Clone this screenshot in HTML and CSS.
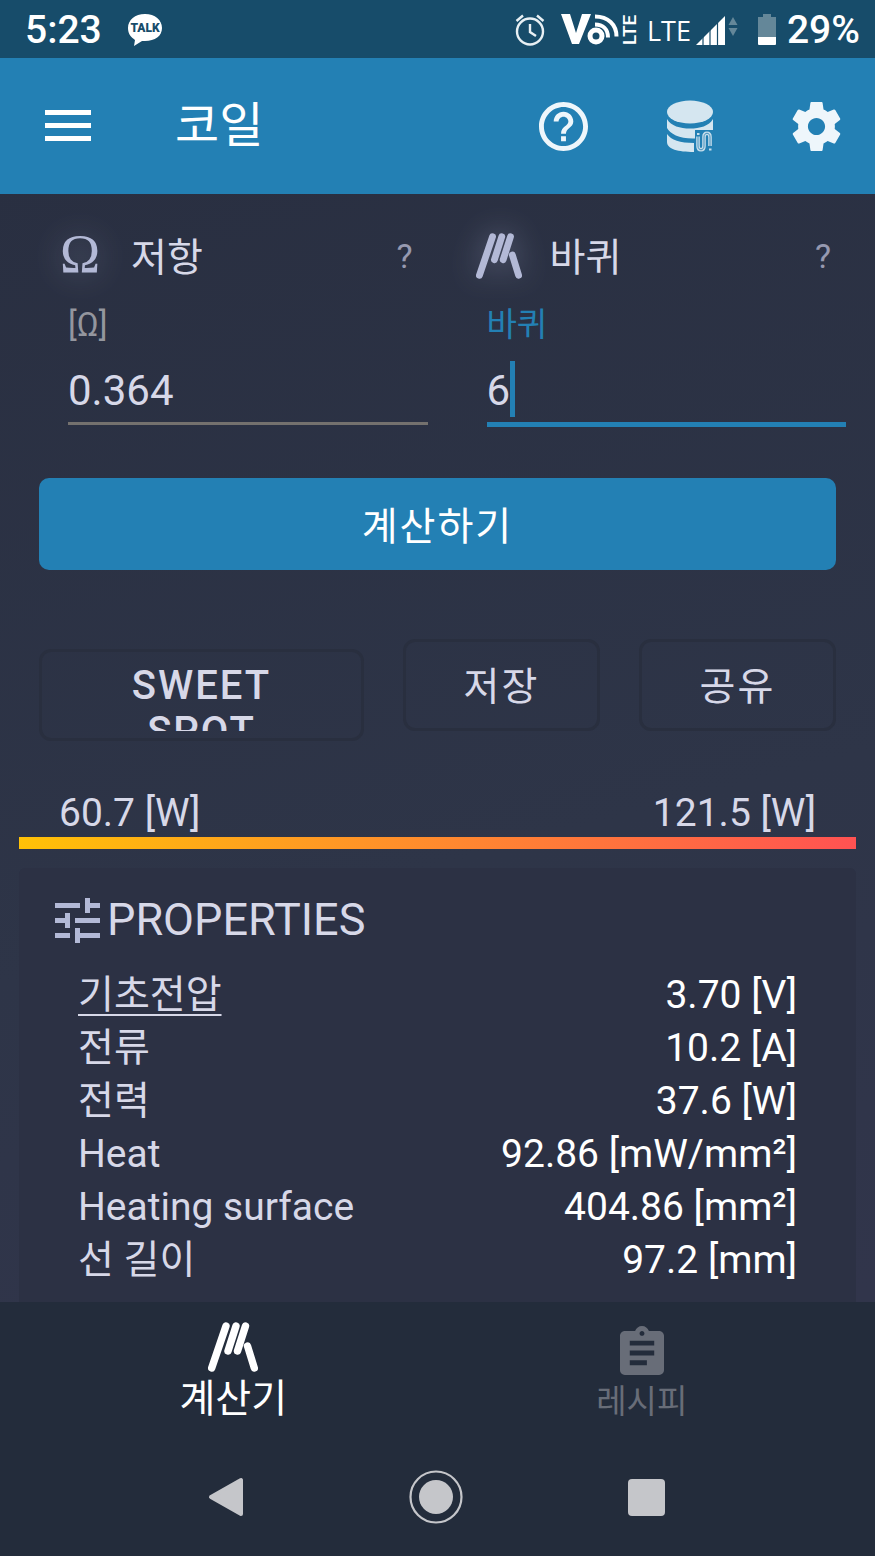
FILE: index.html
```html
<!DOCTYPE html>
<html lang="ko">
  <head>
    <meta charset="utf-8">
    <meta name="viewport" content="width=device-width, initial-scale=1">
    <title>코일</title>
    <link rel="stylesheet" href="styles.css">
  </head>
  <body>
    <svg class="defs" width="0" height="0" aria-hidden="true">
      <symbol id="coil" viewBox="0 0 50 50">
        <path d="M3.700 46 18 4M20 29 28 4M29.500 29 37.500 4M39.500 24 46.300 46" fill="none" stroke="currentColor" stroke-width="7.400" stroke-linecap="round" />
      </symbol>
    </svg>

    <div class="status-bar">
      <span class="clock">5:23</span>
      <svg class="talk" viewBox="0 0 36 34" width="36" height="34">
        <path d="M18 1C8 1 1 7 1 15c0 6 3 9 7 12l-1 6 8-5h3c10 0 17-5 17-13S28 1 18 1z" fill="#fff" />
        <text x="18" y="19" class="talk-text">TALK</text>
      </svg>
      <div class="status-icons">
        <svg class="alarm" viewBox="0 0 30 32" width="30" height="32" fill="none" stroke="#e8f0f4" stroke-width="2.400">
          <circle cx="15" cy="17.500" r="13" />
          <path d="M15 10v8l6 4M1.500 7 8 1.500M28.500 7 22 1.500" />
        </svg>
        <svg class="volte" viewBox="0 0 78 36" width="78" height="36">
          <path d="M0 2h9l6 19 6-19h9L18 32h-7z" fill="#fff" />
          <circle cx="35" cy="24" r="6" fill="none" stroke="#fff" stroke-width="5" />
          <path d="M34 12.500c8 0 13 5 13 13M34 4.500c13 0 21.500 8 21.500 20" fill="none" stroke="#fff" stroke-width="4" />
          <text x="-33" y="75" transform="rotate(-90)" class="volte-text">LTE</text>
        </svg>
        <span class="network">LTE</span>
        <svg class="signal" viewBox="0 0 42 30" width="42" height="30">
          <path d="M0 30 29 1v29z" fill="#fff" />
          <path d="M7 20v10M14 13v17M21.500 6v24" stroke="#174c6a" stroke-width="1.200" />
          <path d="m37 2 4.500 8h-9zM37 21l4.500-8h-9z" fill="#648799" />
        </svg>
        <svg class="battery" viewBox="0 0 18 32" width="18" height="32">
          <path d="M5 0h8v3h5v20H0V3h5z" fill="#648799" />
          <path d="M0 23h18v7q0 1-1 1H1q-1 0-1-1z" fill="#fff" />
        </svg>
        <span class="percent">29%</span>
      </div>
    </div>

    <header class="app-bar">
      <button class="icon-button" aria-label="메뉴">
        <svg viewBox="0 0 46 32" width="46" height="32">
          <path d="M0 0h46v5H0zM0 13h46v5H0zM0 26h46v5H0z" fill="#fff" />
        </svg>
      </button>
      <h1 class="title">코일</h1>
      <div class="actions">
        <button class="icon-button" aria-label="도움말">
          <svg viewBox="2 2 20 20" width="49" height="49">
            <path d="M11 18h2v-2h-2v2zm1-16C6.480 2 2 6.480 2 12s4.480 10 10 10 10-4.480 10-10S17.520 2 12 2zm0 18c-4.410 0-8-3.590-8-8s3.590-8 8-8 8 3.590 8 8-3.590 8-8 8zm0-14c-2.210 0-4 1.790-4 4h2c0-1.100.9-2 2-2s2 .9 2 2c0 2-3 1.750-3 5h2c0-2.250 3-2.500 3-5 0-2.210-1.790-4-4-4z" fill="#eef6fb" />
          </svg>
        </button>
        <button class="icon-button" aria-label="재료">
          <svg viewBox="-1 0 48 52" width="48" height="52">
            <g fill="#d5e6f0">
              <ellipse cx="23" cy="12" rx="23" ry="11.500" />
              <path d="M0 19c4 7 13 9.500 23 9.500S42 26 46 19v11H28v8.500C13 39 3 34 0 28z" />
              <path d="M0 34c4 6 13 9 27 9v9C11 52 0 49 0 42z" />
            </g>
            <path d="M31 36.500v9.500c0 5 6 5 6 0v-9c0-5 6-5 6 0v9" fill="none" stroke="#c6ddeb" stroke-width="3.600" />
            <path d="M31 36v10c0 5 6 5 6 0v-9c0-5 6-5 6 0v10" fill="none" stroke="#2580b3" stroke-width="0.800" />
            <path d="M30 34h2.500M42 49.500h2.500" stroke="#c6ddeb" stroke-width="2" />
          </svg>
        </button>
        <button class="icon-button" aria-label="설정">
          <svg viewBox="2 2 20 20" width="49" height="49">
            <path d="M19.430 12.980c.04-.32.070-.64.070-.98s-.03-.66-.07-.98l2.110-1.650c.19-.15.24-.42.120-.64l-2-3.460c-.12-.22-.39-.3-.61-.22l-2.490 1c-.52-.4-1.080-.73-1.690-.98l-.38-2.650C14.460 2.180 14.250 2 14 2h-4c-.25 0-.46.18-.49.42l-.38 2.650c-.61.250-1.170.59-1.690.98l-2.490-1c-.23-.09-.49 0-.61.220l-2 3.460c-.13.220-.07.490.120.640l2.110 1.650c-.04.32-.07.650-.07.980s.03.660.070.980l-2.110 1.650c-.19.150-.24.420-.12.640l2 3.460c.12.220.39.300.61.220l2.490-1c.52.400 1.080.730 1.690.980l.38 2.650c.03.240.24.420.49.420h4c.25 0 .46-.18.490-.42l.38-2.650c.61-.25 1.170-.59 1.690-.98l2.490 1c.23.090.49 0 .61-.22l2-3.460c.12-.22.070-.49-.12-.64l-2.110-1.650zM12 15.500c-1.930 0-3.500-1.570-3.500-3.500s1.570-3.500 3.500-3.500 3.500 1.570 3.500 3.500-1.570 3.500-3.500 3.500z" fill="#eef6fb" />
          </svg>
        </button>
      </div>
    </header>

    <main class="content">
      <div class="fields">
        <section class="field">
          <div class="field-head">
            <span class="field-icon omega">Ω</span>
            <h2 class="field-title">저항</h2>
            <button class="hint" aria-label="저항 도움말">?</button>
          </div>
          <div class="field-body">
            <label for="resistance">[Ω]</label>
            <input type="text" id="resistance" value="0.364">
          </div>
        </section>
        <section class="field">
          <div class="field-head">
            <span class="field-icon"><svg width="46" height="46"><use href="#coil" /></svg></span>
            <h2 class="field-title">바퀴</h2>
            <button class="hint" aria-label="바퀴 도움말">?</button>
          </div>
          <div class="field-body active">
            <label for="wraps">바퀴</label>
            <input type="text" id="wraps" value="6">
            <span class="caret"></span>
          </div>
        </section>
      </div>

      <button class="calculate">계산하기</button>

      <div class="button-row">
        <button class="outline wide"><span class="clip">SWEET SPOT</span></button>
        <button class="outline">저장</button>
        <button class="outline">공유</button>
      </div>

      <div class="range">
        <div class="range-values">
          <span>60.7 [W]</span>
          <span>121.5 [W]</span>
        </div>
        <div class="range-bar"></div>
      </div>

      <section class="panel">
        <h2 class="panel-title">
          <svg viewBox="3 3 18 18" width="45" height="45">
            <path d="M3 17v2h6v-2H3zM3 5v2h10V5H3zm10 16v-2h8v-2h-8v-2h-2v6h2zM7 9v2H3v2h4v2h2V9H7zm14 4v-2H11v2h10zm-6-4h2V7h4V5h-4V3h-2v6z" fill="#b3b9d6" />
          </svg>
          PROPERTIES
        </h2>
        <table class="properties">
          <tr><th scope="row"><a href="#">기초전압</a></th><td>3.70 [V]</td></tr>
          <tr><th scope="row">전류</th><td>10.2 [A]</td></tr>
          <tr><th scope="row">전력</th><td>37.6 [W]</td></tr>
          <tr><th scope="row">Heat</th><td>92.86 [mW/mm²]</td></tr>
          <tr><th scope="row">Heating surface</th><td>404.86 [mm²]</td></tr>
          <tr><th scope="row">선 길이</th><td>97.2 [mm]</td></tr>
        </table>
      </section>
    </main>

    <nav class="tabs">
      <a href="#" class="tab selected">
        <svg width="50" height="50"><use href="#coil" /></svg>
        <span>계산기</span>
      </a>
      <a href="#" class="tab">
        <svg viewBox="3 1 18 20" width="44" height="49">
          <path d="M19 3h-4.180C14.400 1.840 13.300 1 12 1c-1.300 0-2.400.84-2.820 2H5c-1.100 0-2 .9-2 2v14c0 1.100.9 2 2 2h14c1.100 0 2-.9 2-2V5c0-1.100-.9-2-2-2zm-7 0c.55 0 1 .45 1 1s-.45 1-1 1-1-.45-1-1 .45-1 1-1zm2 14H7v-2h7v2zm3-4H7v-2h10v2zm0-4H7V7h10v2z" fill="currentColor" />
        </svg>
        <span>레시피</span>
      </a>
    </nav>

    <div class="system-bar">
      <button class="icon-button" aria-label="뒤로">
        <svg viewBox="0 0 36 40" width="36" height="40">
          <path d="M3 20 33 3v34z" fill="#c5c6ca" stroke="#c5c6ca" stroke-width="4" stroke-linejoin="round" />
        </svg>
      </button>
      <button class="icon-button" aria-label="홈">
        <svg viewBox="0 0 54 54" width="54" height="54">
          <circle cx="27" cy="27" r="25.500" fill="none" stroke="#c5c6ca" stroke-width="2.200" />
          <circle cx="27" cy="27" r="17" fill="#c5c6ca" />
        </svg>
      </button>
      <button class="icon-button" aria-label="최근 앱">
        <svg viewBox="0 0 37 37" width="37" height="37">
          <rect width="37" height="37" rx="4" fill="#c5c6ca" />
        </svg>
      </button>
    </div>
  </body>
</html>
```

FILE: styles.css
```css
* {
  box-sizing: border-box;
}

body {
  display: flex;
  flex-direction: column;
  min-height: 100vh;
  margin: 0;
  background: linear-gradient(165deg, #292f41 10%, #2e3548 55%, #31354b 85%);
  color: #d7d8e8;
  font-family: Roboto, "Noto Sans CJK KR", sans-serif;
  font-size: 39px;
}

button {
  padding: 0;
  border: none;
  background: none;
  color: inherit;
  font: inherit;
  cursor: pointer;
}

h1,
h2 {
  margin: 0;
  font-weight: 400;
}

svg {
  display: block;
}

.defs {
  position: absolute;
}

.icon-button {
  display: flex;
}

/* status bar */
.status-bar {
  display: flex;
  align-items: center;
  height: 58px;
  padding: 2px 15px 0 25px;
  background-color: #174c6a;
  color: #fff;
  font-weight: 500;
}

.talk {
  margin-left: 25px;
}

.talk-text {
  fill: #174c6a;
  font-size: 12px;
  font-weight: 900;
  text-anchor: middle;
}

.status-icons {
  display: flex;
  align-items: center;
  margin-left: auto;
}

.volte {
  margin-left: 16px;
}

.volte-text {
  fill: #fff;
  font-size: 19px;
  font-weight: 500;
}

.network {
  margin-left: 8px;
  font-family: "Open Sans", sans-serif;
  font-size: 27px;
  font-weight: 400;
}

.signal {
  margin-left: 5px;
}

.battery {
  margin: 0 11px 0 20px;
}

/* app bar */
.app-bar {
  display: flex;
  align-items: center;
  height: 136px;
  padding: 0 34px 0 45px;
  background-color: #2380b4;
  color: #fff;
}

.title {
  margin-left: 84px;
  font-size: 48px;
  line-height: 56px;
}

.actions {
  display: flex;
  align-items: center;
  gap: 78px;
  margin-left: auto;
}

/* inputs */
.content {
  flex: 1;
  display: flex;
  flex-direction: column;
  padding: 24px 19px 0;
}

.fields {
  display: grid;
  grid-template-columns: 1fr 1fr;
}

.field-head {
  display: flex;
  align-items: center;
  height: 75px;
  padding: 0 25px 0 38px;
}

.field-icon {
  display: flex;
  justify-content: center;
  width: 46px;
  color: #b3b9d6;
  filter: drop-shadow(0 0 16px rgba(180, 185, 214, 0.4));
}

.omega {
  height: 46px;
  font-family: "Liberation Serif", serif;
  font-size: 54px;
  line-height: 42px;
}

.field-title {
  margin-left: 28px;
  padding-bottom: 4px;
  font-size: 39px;
}

.hint {
  margin-left: auto;
  color: #9699b0;
  font-size: 34px;
}

.field-body {
  position: relative;
  margin: 0 10px 0 49px;
}

.field-body label {
  display: block;
  height: 64px;
  color: #94969e;
  font-size: 33px;
  line-height: 64px;
}

.field-body input {
  display: block;
  width: 100%;
  height: 68px;
  padding: 2px 0 0;
  border: none;
  border-bottom: 3px solid #74716e;
  border-radius: 0;
  outline: none;
  background: none;
  color: inherit;
  font: inherit;
  font-size: 42px;
}

.active label {
  color: #2380b4;
}

.field-body.active input {
  height: 70px;
  border-bottom: 5px solid #2380b4;
}

.caret {
  position: absolute;
  bottom: 10px;
  left: 23px;
  width: 5px;
  height: 56px;
  background-color: #2380b4;
}

/* buttons */
.calculate {
  height: 92px;
  margin: 51px 20px 0;
  padding-bottom: 3px;
  border-radius: 10px;
  background-color: #2380b4;
  color: #fff;
  letter-spacing: 2px;
}

.button-row {
  display: grid;
  grid-template-columns: 325fr 197fr 197fr;
  gap: 39px;
  align-items: start;
  margin: 69px 20px 0;
}

.outline {
  height: 92px;
  padding-bottom: 4px;
  border: 3px solid #292f3f;
  border-radius: 12px;
  letter-spacing: 2px;
}

.wide {
  margin-top: 10px;
  padding: 10px 60px 7px;
  font-size: 40px;
  font-weight: 500;
}

/* label wraps and gets cut on narrow screens */
.clip {
  display: block;
  height: 69px;
  padding-top: 1px;
  overflow: hidden;
  line-height: 46px;
}

/* power range */
.range {
  margin-top: 48px;
}

.range-values {
  display: flex;
  justify-content: space-between;
  padding: 0 40px;
  line-height: 48px;
}

.range-bar {
  height: 12px;
  background: linear-gradient(to right, #ffc107, #ff8a2e 50%, #ff5252);
}

/* properties */
.panel {
  flex: 1;
  margin-top: 19px;
  padding: 26px 59px 10px 36px;
  border-radius: 6px 6px 0 0;
  background-color: #2c3144;
}

.panel-title {
  display: flex;
  align-items: center;
  gap: 7px;
  font-size: 45px;
  line-height: 52px;
}

.properties {
  width: 100%;
  margin-top: 23px;
  border-collapse: collapse;
}

.properties th,
.properties td {
  padding: 0;
  line-height: 53px;
}

.properties th {
  padding-left: 23px;
  font-weight: 400;
  text-align: left;
}

.properties td {
  color: #fff;
  text-align: right;
}

.properties a {
  color: inherit;
  text-decoration-thickness: 2px;
  text-underline-offset: 6px;
}

/* bottom navigation */
.tabs {
  display: grid;
  grid-template-columns: 1fr 1fr;
  height: 136px;
  padding: 0 29px;
  background-color: #232c3b;
}

.tab {
  display: flex;
  flex-direction: column;
  align-items: center;
  padding-top: 24px;
  color: #686d78;
  font-size: 33px;
  line-height: 54px;
  text-decoration: none;
}

.selected {
  padding-top: 20px;
  color: #fff;
  font-size: 39px;
}

.system-bar {
  display: flex;
  align-items: center;
  justify-content: space-between;
  height: 118px;
  padding: 0 210px 0 208px;
  background-color: #232c3b;
}
```
